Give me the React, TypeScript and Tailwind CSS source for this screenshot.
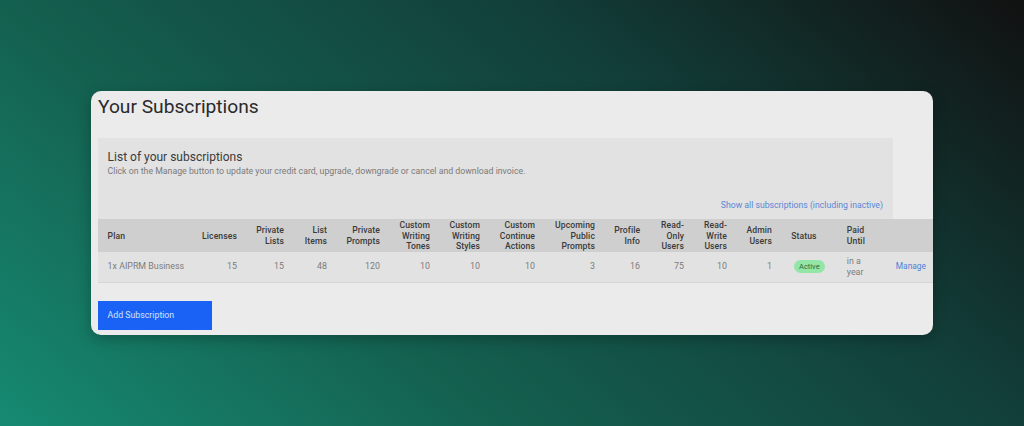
const headers: { label: string[]; left?: boolean }[] = [
  { label: ["Plan"], left: true },
  { label: ["Licenses"] },
  { label: ["Private", "Lists"] },
  { label: ["List", "Items"] },
  { label: ["Private", "Prompts"] },
  { label: ["Custom", "Writing", "Tones"] },
  { label: ["Custom", "Writing", "Styles"] },
  { label: ["Custom", "Continue", "Actions"] },
  { label: ["Upcoming", "Public", "Prompts"] },
  { label: ["Profile", "Info"] },
  { label: ["Read-", "Only", "Users"] },
  { label: ["Read-", "Write", "Users"] },
  { label: ["Admin", "Users"] },
  { label: ["Status"], left: true },
  { label: ["Paid", "Until"], left: true },
  { label: [""], left: true },
];

const nums = ["15", "15", "48", "120", "10", "10", "10", "3", "16", "75", "10", "1"];

export default function App() {
  return (
    <div className="flex h-[426px] w-[1024px] items-center justify-center overflow-hidden bg-[linear-gradient(40deg,#168a72_0%,#14604f_33%,#123f3a_67%,#111111_100%)] font-['Roboto',sans-serif]">
      <div className="h-[244px] w-[842px] rounded-[10px] bg-[#ebebec] pl-[7px] shadow-[0_4px_14px_rgba(0,0,0,0.25)]">
        <h1 className="flex h-[47px] items-start pt-[3px] text-[19.2px] leading-[26px] font-normal text-[#2a2a2a]">Your Subscriptions</h1>
        <div className="h-[81px] w-[795px] bg-[#e2e2e2] pt-[11px] pr-[10px] pl-[9.6px]">
          <h2 className="text-[12px] leading-[16px] text-[#3a3a3a]">List of your subscriptions</h2>
          <p className="text-[8.75px] leading-[12px] text-[#7a7a7a]">Click on the Manage button to update your credit card, upgrade, downgrade or cancel and download invoice.</p>
          <div className="mt-[22px] text-right text-[8.7px] leading-[12px] text-[#5b86d6]">Show all subscriptions (including inactive)</div>
        </div>
        <table className="w-[835px] table-fixed border-collapse">
          <colgroup>
            <col className="w-[93.6px]" /><col className="w-[55px]" /><col className="w-[47px]" /><col className="w-[43px]" />
            <col className="w-[53px]" /><col className="w-[50px]" /><col className="w-[50px]" /><col className="w-[55px]" />
            <col className="w-[60px]" /><col className="w-[45px]" /><col className="w-[44px]" /><col className="w-[43px]" />
            <col className="w-[45px]" /><col className="w-[55.6px]" /><col className="w-[49px]" /><col />
          </colgroup>
          <thead>
            <tr className="h-[33px] bg-[#cfcfcf]">
              {headers.map((h, i) => (
                <th key={i} className={`px-[9.6px] pt-[1px] text-[8.6px] leading-[10.7px] font-medium tracking-[0.1px] text-[#3a3a3a] ${h.left ? "text-left" : "text-right"}`}>
                  {h.label.map((l, j) => (
                    <div key={j} className="whitespace-nowrap">{l}</div>
                  ))}
                </th>
              ))}
            </tr>
          </thead>
          <tbody>
            <tr className="h-[30px] border-b border-[#d6d6d6] bg-[#e2e2e2] text-[8.85px] leading-[11px] text-[#7c7c7c]">
              <td className="px-[9.6px] whitespace-nowrap">1x AIPRM Business</td>
              {nums.map((n, i) => (
                <td key={i} className="px-[9.6px] text-right">{n}</td>
              ))}
              <td className="pl-[12.4px]">
                <span className="inline-block rounded-full bg-[#93e6a6] px-[5px] text-[7.5px] leading-[13px] text-[#2f6b3f]">Active</span>
              </td>
              <td className="px-[9.6px]">
                <div>in a</div>
                <div>year</div>
              </td>
              <td className="pr-[7px] pl-[9.6px] text-[8.4px] whitespace-nowrap text-[#4f7fd8]">Manage</td>
            </tr>
          </tbody>
        </table>
        <button className="mt-[18px] flex h-[29px] w-[114px] items-center bg-[#1a62f5] pl-[9.6px] text-[8.75px] text-[#d5e2fb]">Add Subscription</button>
      </div>
    </div>
  );
}
